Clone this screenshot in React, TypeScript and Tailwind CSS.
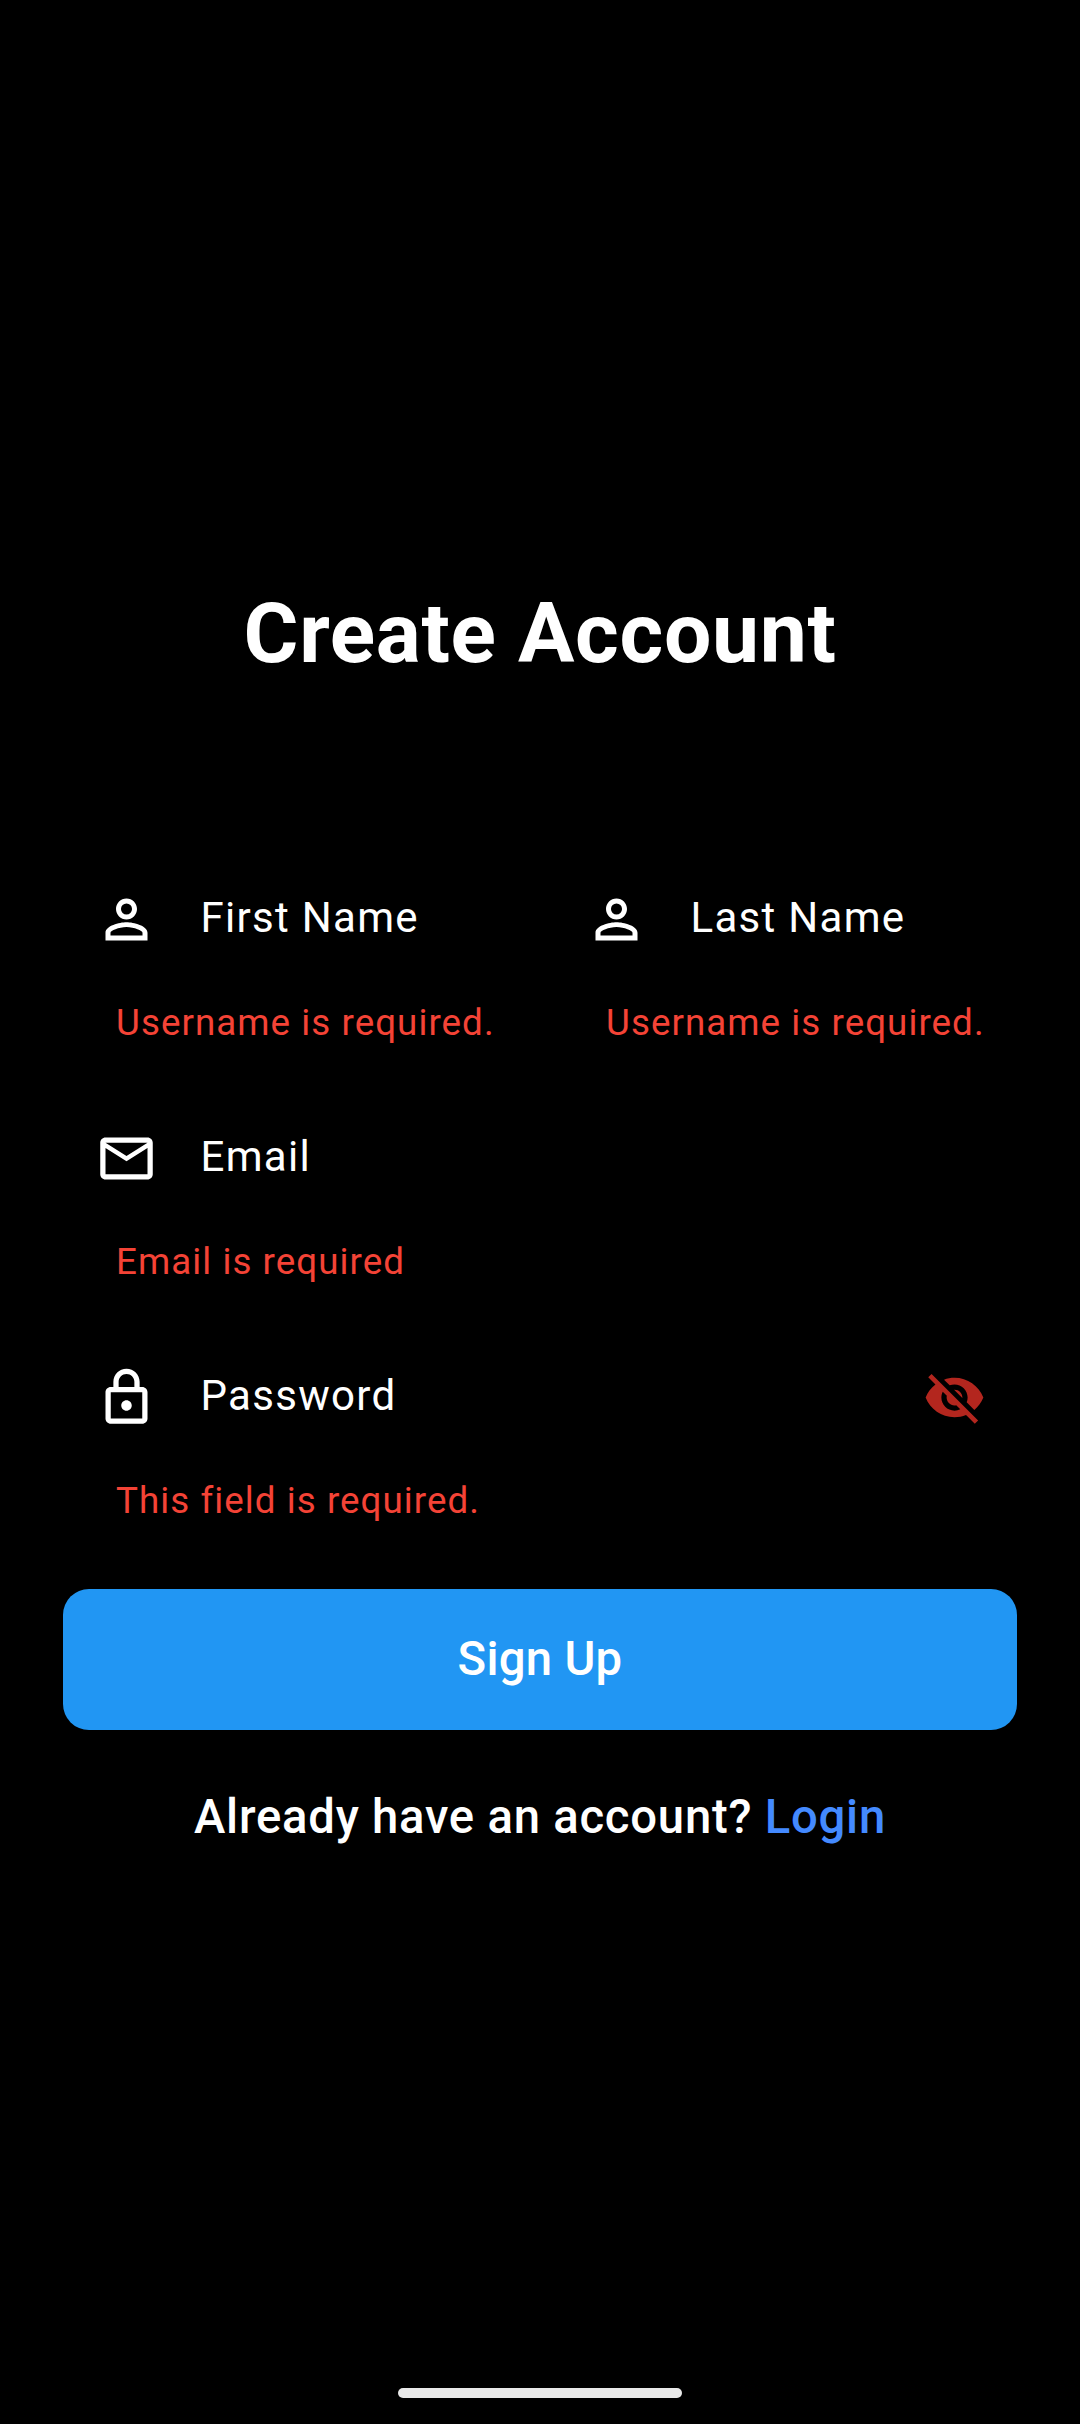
import React from "react";

const PERSON =
  "M12 5.9a2.1 2.1 0 1 1 0 4.2 2.1 2.1 0 0 1 0-4.2m0 9c2.97 0 6.1 1.46 6.1 2.1v1.1H5.9V17c0-.64 3.13-2.1 6.1-2.1M12 4C9.79 4 8 5.79 8 8s1.79 4 4 4 4-1.79 4-4-1.79-4-4-4zm0 9c-2.67 0-8 1.34-8 4v3h16v-3c0-2.66-5.33-4-8-4z";
const MAIL =
  "M22 6c0-1.1-.9-2-2-2H4c-1.1 0-2 .9-2 2v12c0 1.1.9 2 2 2h16c1.1 0 2-.9 2-2V6zm-2 0-8 5-8-5h16zm0 12H4V8l8 5 8-5v10z";
const LOCK =
  "M18 8h-1V6c0-2.76-2.24-5-5-5S7 3.24 7 6v2H6c-1.1 0-2 .9-2 2v10c0 1.1.9 2 2 2h12c1.1 0 2-.9 2-2V10c0-1.1-.9-2-2-2zM9 6c0-1.66 1.34-3 3-3s3 1.34 3 3v2H9V6zm9 14H6V10h12v10zm-6-3c1.1 0 2-.9 2-2s-.9-2-2-2-2 .9-2 2 .9 2 2 2z";
const EYE_OFF =
  "M12 7c2.76 0 5 2.24 5 5 0 .65-.13 1.26-.36 1.83l2.92 2.92c1.51-1.26 2.7-2.89 3.43-4.75-1.73-4.39-6-7.5-11-7.5-1.4 0-2.74.25-3.98.7l2.16 2.16C10.74 7.13 11.35 7 12 7zM2 4.27l2.28 2.28.46.46C3.08 8.3 1.78 10.02 1 12c1.73 4.39 6 7.5 11 7.5 1.55 0 3.03-.3 4.38-.84l.42.42L19.73 22 21 20.73 3.27 3 2 4.27zM7.53 9.8l1.55 1.55c-.05.21-.08.43-.08.65 0 1.66 1.34 3 3 3 .22 0 .44-.03.65-.08l1.55 1.55c-.67.33-1.41.53-2.2.53-2.76 0-5-2.24-5-5 0-.79.2-1.53.53-2.2zm4.31-.78 3.15 3.15.02-.16c0-1.66-1.34-3-3-3l-.17.01z";

function Icon({ d, className }: { d: string; className: string }) {
  return (
    <svg viewBox="0 0 24 24" fill="currentColor" className={`mb-px size-[63px] shrink-0 ${className}`}>
      <path d={d} />
    </svg>
  );
}

function Field({ icon, label, error, hidden = false }: { icon: string; label: string; error: string; hidden?: boolean }) {
  return (
    <div className="h-[239px] min-w-0 flex-1">
      <div className="flex h-[126px] items-center pl-[31.5px] pr-[31.5px]">
        <Icon d={icon} className="text-white" />
        <span className="ml-[43px] mt-[-5px] flex-1 whitespace-nowrap text-[42px] leading-[48px] tracking-[1.3px] text-white">{label}</span>
        {hidden && <Icon d={EYE_OFF} className="text-[#b3261e]" />}
      </div>
      <p className="mt-[18px] whitespace-nowrap pl-[53px] text-[36.75px] leading-[44px] tracking-[1.05px] text-[#f44336]">{error}</p>
    </div>
  );
}

export default function App() {
  return (
    <main className="flex h-[2424px] w-[1080px] flex-col bg-black px-[63px] font-[Roboto,sans-serif] text-white">
      <h1 className="mt-[585px] text-center text-[84px] font-bold leading-[98px] tracking-[0.65px]">Create Account</h1>
      <form className="mt-[174px] flex flex-col">
        <div className="flex gap-[26px]">
          <Field icon={PERSON} label="First Name" error="Username is required." />
          <Field icon={PERSON} label="Last Name" error="Username is required." />
        </div>
        <div className="flex"><Field icon={MAIL} label="Email" error="Email is required" /></div>
        <div className="flex"><Field icon={LOCK} label="Password" error="This field is required." hidden /></div>
        <button type="button" className="mt-[15px] h-[141px] rounded-[26px] bg-[#2196f3] pb-px text-[47.25px] font-medium leading-[56px] tracking-[0.26px]">Sign Up</button>
      </form>
      <p className="mt-[59px] text-center text-[47.25px] font-medium leading-[56px] tracking-[0.76px]">
        Already have an account? <a className="text-[#448aff]">Login</a>
      </p>
      <div className="mb-[26px] mt-auto h-[10px] w-[284px] self-center rounded-full bg-[#e9e9e9]" />
    </main>
  );
}
